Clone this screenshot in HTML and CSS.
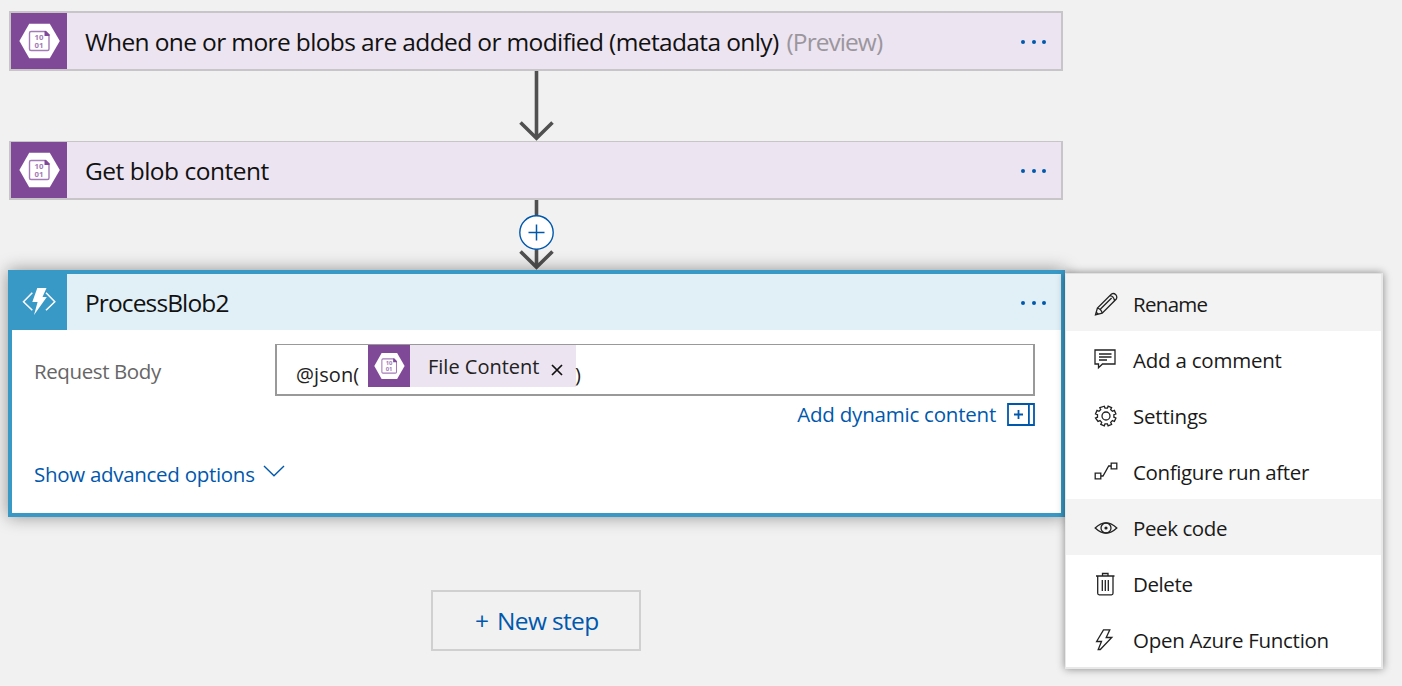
FILE: index.html
```
<!DOCTYPE html>
<html lang="en">
<head>
<meta charset="utf-8">
<title>Logic app designer</title>
<link rel="stylesheet" href="styles.css">
</head>
<body>
<svg class="defs" width="0" height="0">
  <symbol id="blob" viewBox="0 0 56 56">
    <path d="M18.2 10.800h20.600L48.800 28 38.800 45.200H18.200L8.400 28z" fill="#fff"/>
    <path d="M20 18.500h14.500l3.500 3.500v14q0 1.500-1.500 1.500h-16.500q-1.500 0-1.500-1.500v-16q0-1.500 1.500-1.500z" fill="none" stroke="#a37bb7" stroke-width="1.400"/>
    <path d="M33.500 18h1.500l3.500 3.500v1.500h-5z" fill="#804998"/>
    <text x="23.600" y="26.800" class="bits">10</text>
    <text x="23.600" y="35" class="bits">01</text>
  </symbol>
</svg>
<main class="designer">
  <section class="flow">
    <article class="step">
      <svg class="step-icon" viewBox="0 0 56 56"><use href="#blob"/></svg>
      <h2 class="step-title t-trigger">When one or more blobs are added or modified (metadata only)</h2><span class="preview">(Preview)</span>
      <span class="dots"><i></i><i></i><i></i></span>
    </article>
    <svg class="arrow" width="40" height="70" viewBox="0 0 40 70"><path d="M20.500 0V67M4.500 51.500L20.500 67.300 36.500 51.500"/></svg>
    <article class="step step-second">
      <svg class="step-icon" viewBox="0 0 56 56"><use href="#blob"/></svg>
      <h2 class="step-title t-get">Get blob content</h2>
      <span class="dots"><i></i><i></i><i></i></span>
    </article>
    <svg class="arrow" width="40" height="70" viewBox="0 0 40 70"><path d="M20.500 0V67M4.500 51.500L20.500 67.300 36.500 51.500"/><circle cx="20.500" cy="32.500" r="16.700"/><path class="plus" d="M12.500 32.500h16M20.500 24.500v16"/></svg>
    <article class="action">
      <header class="action-head">
        <svg class="action-icon" width="59" height="60" viewBox="0 0 59 60">
          <path d="M24.300 22.700L15.500 31.700 24.300 40.300M38 22.700L46.800 31.700 38 40.300" fill="none" stroke="#fff" stroke-width="1.500"/>
          <path d="M29.300 18h9.200l-4 9h4.300L26 45l3.600-13h-5.300z" fill="#fff"/>
        </svg>
        <h2 class="step-title t-process">ProcessBlob2</h2>
        <span class="dots"><i></i><i></i><i></i></span>
      </header>
      <div class="field">
        <label class="label">Request Body</label>
        <div class="input">
          <span class="expr">@json(</span>
          <span class="token"><svg class="token-icon" viewBox="0 0 56 56"><use href="#blob"/></svg><span class="token-name">File Content</span><svg class="close" width="12" height="12" viewBox="0 0 12 12"><path d="M1 1l10 10M11 1L1 11"/></svg></span>
          <span class="paren">)</span>
        </div>
      </div>
      <div class="dynamic"><a class="t-dynamic">Add dynamic content</a><svg width="28" height="23" viewBox="0 0 28 23"><path d="M1 1h26v21H1zM21.900 1v21M7 11.500h9M11.500 7v9"/></svg></div>
      <div class="advanced"><a class="t-advanced">Show advanced options</a><svg width="22" height="12" viewBox="0 0 22 12"><path d="M1 1l10 9.800L21 1"/></svg></div>
    </article>
    <button class="new-step"><span class="new-plus">+</span><span class="t-new">New step</span></button>
  </section>
  <nav class="menu">
    <div class="item lit"><svg viewBox="0 0 24 24"><path d="M1.500 22.800l1.900-6.700L17.500 2q2.200-1.300 4.300.7 1.700 2 .5 4.300L8.200 21.200zM3.400 16.100q3.800.7 4.800 5.100M2.300 20.200l1.900 1.900M15.800 3.700q3.800.3 4.700 4.900M6.500 17L17.600 6"/></svg><span class="m1">Rename</span></div>
    <div class="item"><svg viewBox="0 0 24 24"><path d="M1 2h20v14H8.500l-4 3.800v-3.800H1zM5 6h12.500M5 9h12.500M5 12h8"/></svg><span class="m2">Add a comment</span></div>
    <div class="item"><svg viewBox="0 0 24 24"><path d="M10.100 1.200l.7 2h2.400l.7-2 3.500 1.400-.9 2 1.700 1.700 2-.9 1.500 3.500-2 .8v2.500l2 .8-1.500 3.500-2-.9-1.700 1.700.9 2-3.500 1.500-.7-2h-2.400l-.7 2-3.500-1.500.9-2-1.700-1.700-2 .9L1.300 13l2-.8V9.700l-2-.8 1.500-3.500 2 .9 1.700-1.700-.9-2z" transform="translate(.2 1)"/><circle cx="12" cy="12" r="4"/></svg><span class="m3">Settings</span></div>
    <div class="item"><svg viewBox="0 0 24 24"><path d="M1.200 13.200h5.600v5.600H1.200zM17.200 3.200h5.600v5.600h-5.600zM6.800 16h2.200L14.700 6h2.500"/></svg><span class="m4">Configure run after</span></div>
    <div class="item lit"><svg viewBox="0 0 24 24"><path d="M1.200 12Q12 1.800 22.800 12 12 22.200 1.200 12z"/><circle cx="12" cy="12" r="5"/><circle class="pupil" cx="12" cy="12" r="1.600"/></svg><span class="m5">Peek code</span></div>
    <div class="item"><svg viewBox="0 0 24 24"><path d="M2 4h18.500M8.500 4V1.500h5.500V4M3.700 4v17.300q0 1.500 1.500 1.500h12.300q1.500 0 1.500-1.500V4M8.300 8v11M11.300 8v11M14.300 8v11"/></svg><span class="m6">Delete</span></div>
    <div class="item"><svg viewBox="0 0 24 24"><path d="M9.500 1.800h6.300L12.200 9.500h5.600L6.300 21.500H4.200L7.500 13.500H2.600z"/></svg><span class="m7">Open Azure Function</span></div>
  </nav>
</main>
</body>
</html>
```
FILE: styles.css
```
* { box-sizing: border-box; }
body {
  margin: 0;
  height: 686px;
  overflow: hidden;
  background: #f1f1f1;
  color: #111;
  font-family: "Open Sans", "Noto Sans", sans-serif;
}
.defs { display: block; }
.bits { font: 700 7.800px "Noto Sans", sans-serif; fill: #a37bb7; }
.designer { display: flex; align-items: flex-start; }
.flow { width: 1057px; margin-left: 8px; padding-top: 11px; display: flex; flex-direction: column; align-items: center; flex: none; }
.step { width: 1054px; height: 60px; margin-right: 1px; display: flex; align-items: center; background: #ece4f0; border: 2px solid #c7c5c8; padding-right: 15px; }
.step-second { height: 59px; border-top-width: 1px; }
.step-second .step-icon { margin-top: 0; }
.step-icon { width: 56px; height: 56px; background: #804998; flex: none; }
.step-title { margin: 2px 0 0 18px; font-size: 24.500px; font-weight: 400; line-height: 34px; white-space: nowrap; }
.t-trigger { letter-spacing: -.62px; }
.t-get { letter-spacing: -.5px; }
.t-process { letter-spacing: -.88px; }
.preview { margin: 2px 0 0 8px; font-size: 24.500px; line-height: 34px; color: #9b969e; letter-spacing: -.95px; }
.dots { margin: 2px 0 0 auto; display: flex; gap: 6.500px; }
.dots i { width: 4px; height: 4px; border-radius: 50%; background: #0058ad; }
.arrow { display: block; margin-right: 2px; fill: none; stroke: #505050; stroke-width: 3.600; }
.arrow circle { fill: #fff; stroke: #0058ad; stroke-width: 1.400; }
.arrow .plus { stroke: #0058ad; stroke-width: 1.500; }
.action { width: 1057px; height: 247px; border: 4px solid #3999c6; background: #fff; box-shadow: 0 0 16px rgba(0,0,0,.4); }
.action-head { height: 56px; display: flex; align-items: center; background: #e1eff6; padding-right: 15px; }
.action-icon { margin: -4px 0 0 -4px; background: #3999c6; flex: none; }
.field { display: flex; padding: 14px 26px 0 22px; }
.label { width: 241px; font-size: 20.500px; line-height: 28px; padding-top: 13px; color: #666; letter-spacing: -.4px; }
.input { width: 760px; height: 52px; border: 2px solid #999; border-top-width: 1px; display: flex; padding-left: 19px; font-size: 20px; color: #222; white-space: nowrap; }
.expr { width: 72px; line-height: 28px; padding-top: 16px; letter-spacing: .1px; }
.token { width: 208px; height: 42px; display: flex; align-items: center; background: #ece4f0; }
.token-icon { width: 42px; height: 42px; background: #804998; flex: none; }
.token-name { margin-left: 18px; width: 124px; line-height: 28px; padding-top: 2px; }
.close { margin: 8px 0 0 -1px; fill: none; stroke: #111; stroke-width: 1.700; }
.paren { line-height: 28px; padding-top: 16px; margin-left: -1px; }
.dynamic { display: flex; justify-content: flex-end; align-items: center; gap: 11px; height: 28px; margin: 4px 26px 0 0; font-size: 20.500px; color: #0058ad; letter-spacing: -.22px; }
.dynamic svg { fill: none; stroke: #0058ad; stroke-width: 1.800; }
.advanced { display: flex; align-items: center; gap: 9px; height: 28px; margin: 32px 0 0 22px; font-size: 20.500px; color: #0058ad; letter-spacing: -.29px; }
.advanced a { width: 220px; white-space: nowrap; }
.advanced svg { margin-top: -6px; fill: none; stroke: #0058ad; stroke-width: 1.400; }
.new-step { width: 210px; height: 61px; margin: 73px 1px 0 0; display: flex; align-items: center; border: 2px solid #d0d0d0; background: #f1f1f1; padding: 0 0 0 42px; font: 24.500px/34px "Open Sans", "Noto Sans", sans-serif; color: #0058ad; }
.new-plus { width: 22px; text-align: left; }
.t-new { letter-spacing: -.65px; }
.menu { position: relative; width: 318px; height: 396px; margin-top: 273px; flex: none; background: #fff; border: 1px solid #e8e8e8; border-right-width: 2px; border-bottom-width: 2px; border-top-color: #e0e0e0; box-shadow: 0 0 8px rgba(0,0,0,.45); }
.item { height: 56px; display: flex; align-items: center; padding: 2px 0 0 28px; font-size: 20.500px; line-height: 28px; color: #1a1a1a; white-space: nowrap; }
.item:first-child { height: 57px; padding-top: 3px; }
.lit { background: #f3f3f3; }
.item svg { width: 24px; height: 24px; margin-right: 15px; fill: none; stroke: #222; stroke-width: 1.300; flex: none; }
.item .pupil { fill: #222; stroke: none; }
.m1 { letter-spacing: -.7px; }
.m2 { letter-spacing: -.23px; }
.m3 { letter-spacing: -.2px; }
.m4 { letter-spacing: -.38px; }
.m5 { letter-spacing: -.4px; }
.m6 { letter-spacing: -.4px; }
.m7 { letter-spacing: -.28px; }
```
